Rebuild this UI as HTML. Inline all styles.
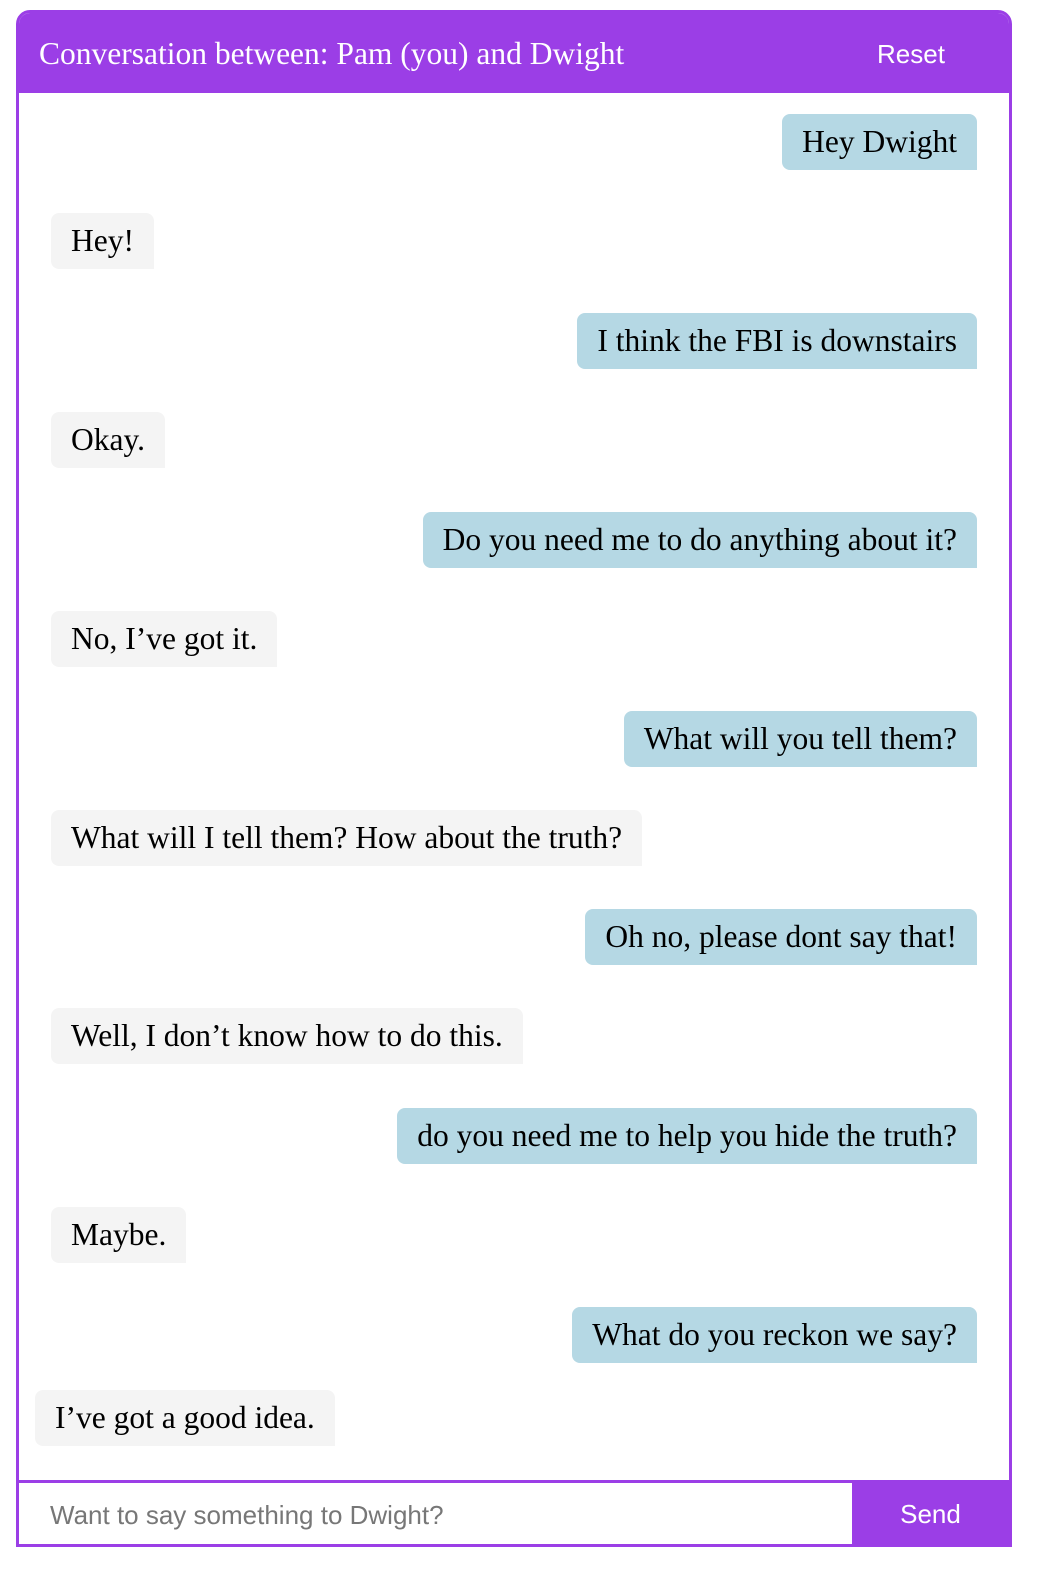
<!DOCTYPE html>
<html><head><meta charset="utf-8"><style>
html,body{margin:0;padding:0;background:#fff;width:1040px;height:1594px;overflow:hidden}
.box{position:absolute;left:16px;top:10px;width:990px;height:1531px;border:3px solid #9b3ee6;border-radius:14px 14px 0 0;overflow:hidden}
.hdr{position:absolute;left:0;top:0;width:990px;height:80px;background:#9b3ee6}
.title{position:absolute;left:20px;top:21px;font:31.5px "Liberation Serif",serif;color:#fff;white-space:nowrap;line-height:40px}
.reset{position:absolute;left:858px;top:26px;font:26px "Liberation Sans",sans-serif;color:#fff;line-height:30px}
.b{position:absolute;height:56px;padding:0 20px;font:31.5px "Liberation Serif",serif;line-height:56px;color:#000;border-radius:8px 8px 0 8px;white-space:nowrap;box-sizing:border-box}
.u{background:#b5d8e4;right:32px}
.d{background:#f4f4f4;left:32px}
.inp{position:absolute;left:0;top:1467px;width:990px;height:64px;border-top:3px solid #9b3ee6;background:#fff}
.ph{position:absolute;left:31px;top:16px;font:26px "Liberation Sans",sans-serif;line-height:32px;color:#777}
.send{position:absolute;left:833px;top:0;width:157px;height:64px;background:#9b3ee6;color:#fff;font:26px "Liberation Sans",sans-serif;text-align:center;line-height:62px}
</style></head><body>
<div class="box">
<div class="hdr"><div class="title">Conversation between: Pam (you) and Dwight</div><div class="reset">Reset</div></div>
<div class="b u" style="top:101px">Hey Dwight</div>
<div class="b d" style="top:200px">Hey!</div>
<div class="b u" style="top:300px">I think the FBI is downstairs</div>
<div class="b d" style="top:399px">Okay.</div>
<div class="b u" style="top:499px">Do you need me to do anything about it?</div>
<div class="b d" style="top:598px">No, I’ve got it.</div>
<div class="b u" style="top:698px">What will you tell them?</div>
<div class="b d" style="top:797px">What will I tell them? How about the truth?</div>
<div class="b u" style="top:896px">Oh no, please dont say that!</div>
<div class="b d" style="top:995px">Well, I don’t know how to do this.</div>
<div class="b u" style="top:1095px">do you need me to help you hide the truth?</div>
<div class="b d" style="top:1194px">Maybe.</div>
<div class="b u" style="top:1294px">What do you reckon we say?</div>
<div class="b d" style="top:1377px;left:16px">I’ve got a good idea.</div>
<div class="inp"><div class="ph">Want to say something to Dwight?</div><div class="send">Send</div></div>
</div>
</body></html>
